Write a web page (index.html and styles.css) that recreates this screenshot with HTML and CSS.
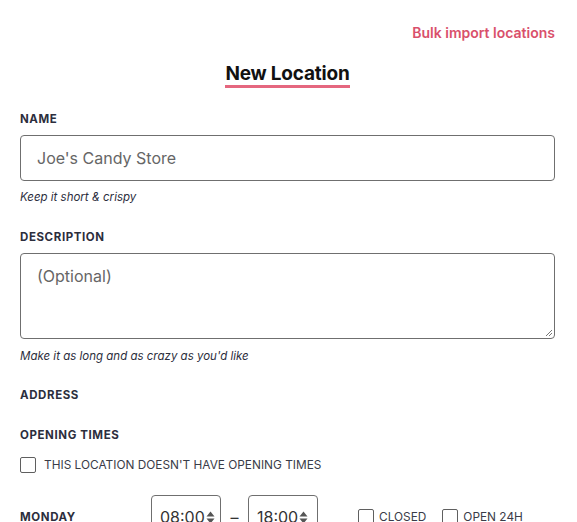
FILE: index.html
```html
<!DOCTYPE html>
<html>
<head>
<meta charset="utf-8">
<link rel="stylesheet" href="styles.css">
</head>
<body>
<div class="page">
  <div class="topbar"><a class="bulk" href="#">Bulk import locations</a></div>
  <div class="title-wrap"><h1 class="title">New Location</h1></div>

  <div class="field">
    <div class="label">Name</div>
    <div class="input">Joe's Candy Store</div>
    <div class="help">Keep it short &amp; crispy</div>
  </div>

  <div class="field">
    <div class="label">Description</div>
    <div class="textarea">(Optional)
      <svg class="grip" width="8" height="8" viewBox="0 0 8 8"><path d="M7 1 L1 7 M7 4 L4 7" stroke="#777" stroke-width="1"/></svg>
    </div>
    <div class="help">Make it as long and as crazy as you'd like</div>
  </div>

  <div class="label section first">Address</div>
  <div class="label section">Opening times</div>

  <div class="check-row">
    <span class="box"></span>
    <span class="check-text">This location doesn't have opening times</span>
  </div>

  <div class="day-row">
    <div class="day">Monday</div>
    <div class="time"><span>08:00</span><svg class="spin" width="9" height="13" viewBox="0 0 9 13"><path d="M4.5 0.5 L8.5 5.5 L0.5 5.5 Z M0.5 7.5 L8.5 7.5 L4.5 12.5 Z" fill="#555"/></svg></div>
    <div class="dash">–</div>
    <div class="time"><span>18:00</span><svg class="spin" width="9" height="13" viewBox="0 0 9 13"><path d="M4.5 0.5 L8.5 5.5 L0.5 5.5 Z M0.5 7.5 L8.5 7.5 L4.5 12.5 Z" fill="#555"/></svg></div>
    <div class="opt"><span class="box"></span><span class="check-text">Closed</span></div>
    <div class="opt"><span class="box"></span><span class="check-text">Open 24H</span></div>
  </div>
</div>
</body>
</html>
```

FILE: styles.css
```css
* { box-sizing: border-box; }
html, body { margin: 0; padding: 0; background: #fff; }
body {
  font-family: Inter, "Noto Sans", sans-serif;
  color: #2c2e3d;
}
.page {
  padding: 23px 22px 0 20px;
}
.topbar {
  display: flex;
  justify-content: flex-end;
  line-height: 20px;
}
.bulk {
  color: #d9506b;
  font-weight: 600;
  font-size: 14px;
  text-decoration: none;
}
.title-wrap {
  display: flex;
  justify-content: center;
  margin-top: 20px;
}
.title {
  margin: 0;
  font-size: 19px;
  line-height: 22px;
  font-weight: 700;
  color: #111;
  border-bottom: 3px solid #e5677f;
  letter-spacing: -0.2px;
}
.field { margin-top: 23px; }
.field + .field { margin-top: 24px; }
.label {
  font-size: 11.5px;
  line-height: 16px;
  font-weight: 700;
  text-transform: uppercase;
  letter-spacing: 0.6px;
  color: #2c2e3d;
  margin-bottom: 8px;
}
.input, .textarea {
  border: 1px solid #6f6f6f;
  border-radius: 4px;
  color: #666;
  font-size: 16px;
  padding: 0 16px;
}
.input {
  height: 46px;
  line-height: 44px;
}
.textarea {
  position: relative;
  height: 86px;
  line-height: 20px;
  padding-top: 12px;
}
.grip {
  position: absolute;
  right: 1px;
  bottom: 1px;
}
.help {
  font-size: 11.5px;
  line-height: 16px;
  font-style: italic;
  color: #2c2e3d;
  margin-top: 8px;
}
.textarea + .help { margin-top: 9px; }
.section {
  margin-top: 24px;
  margin-bottom: 0;
}
.section.first { margin-top: 23px; }
.check-row {
  display: flex;
  align-items: center;
  gap: 8px;
  margin-top: 14px;
  height: 16px;
}
.box {
  width: 16px;
  height: 16px;
  border: 1px solid #5f5f5f;
  border-radius: 2px;
  flex: none;
  background: #fff;
}
.check-text {
  font-size: 11.85px;
  text-transform: uppercase;
  color: #3a3c48;
}
.day-row {
  display: flex;
  align-items: center;
  margin-top: 22px;
  height: 44px;
}
.day {
  width: 131px;
  font-size: 11.5px;
  font-weight: 700;
  letter-spacing: 0.6px;
  text-transform: uppercase;
}
.time {
  width: 70px;
  height: 44px;
  border: 1px solid #6f6f6f;
  border-radius: 4px;
  display: flex;
  align-items: center;
  padding-left: 8px;
  font-size: 16px;
  color: #333;
}
.spin { margin-left: 1px; }
.dash {
  width: 27px;
  text-align: center;
  font-size: 16px;
  color: #333;
}
.opt {
  display: flex;
  align-items: center;
  gap: 5px;
  margin-left: 40px;
}
.opt + .opt { margin-left: 16px; }
```
